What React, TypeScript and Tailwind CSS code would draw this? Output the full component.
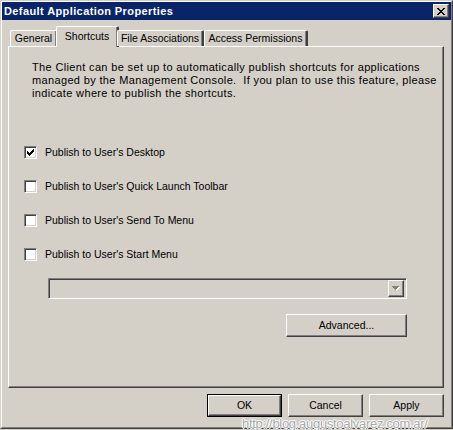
import React from 'react';

// classic 3D edges
const raised =
  'border border-t-white border-l-white border-r-[#404040] border-b-[#404040] shadow-[inset_-1px_-1px_0_#808080]';
const sunken =
  'border border-t-[#808080] border-l-[#808080] border-r-white border-b-white shadow-[inset_1px_1px_0_#404040,inset_-1px_-1px_0_#d4d0c8]';

const font = "font-['Liberation_Sans',Arial,sans-serif]";

const tabs = [
  { label: 'General', width: 48 },
  { label: 'Shortcuts', width: 59, active: true },
  { label: 'File Associations', width: 87 },
  { label: 'Access Permissions', width: 104 },
];

const options = [
  { label: "Publish to User's Desktop", checked: true },
  { label: "Publish to User's Quick Launch Toolbar", checked: false },
  { label: "Publish to User's Send To Menu", checked: false },
  { label: "Publish to User's Start Menu", checked: false },
];

const CheckMark = () => (
  <svg width="7" height="7" viewBox="0 0 7 7" shapeRendering="crispEdges">
    <path
      d="M6 0h1v3H6zM5 1h1v3H5zM4 2h1v3H4zM0 2h1v3H0zM1 3h1v3H1zM2 4h1v3H2zM3 3h1v3H3z"
      fill="#000"
    />
  </svg>
);

const Checkbox = ({ checked }: { checked: boolean }) => (
  <div className={`w-[13px] h-[13px] bg-white flex items-center justify-center ${sunken}`}>
    {checked && <CheckMark />}
  </div>
);

const Button = ({ label, isDefault }: { label: string; isDefault?: boolean }) => (
  <div
    className={`w-[75px] h-[23px] ${isDefault ? 'border border-black' : ''} flex`}
  >
    <div className={`flex-1 flex items-center justify-center text-[10.5px] text-black ${raised}`}>
      {label}
    </div>
  </div>
);

export default function App() {
  return (
    <div
      className={`relative w-[453px] h-[430px] bg-[#d4d0c8] overflow-hidden ${font}`}
    >
      <div className="w-[453px] h-[429px] border border-t-[#d4d0c8] border-l-[#d4d0c8] border-r-[#404040] border-b-[#404040]">
        <div className="h-full border border-t-white border-l-white border-r-[#808080] border-b-[#808080]">
          {/* title bar */}
          <div className="h-[18px] bg-[#0a246a] flex items-center pl-[2px] pr-[2px]">
            <span className="text-white font-bold text-[11px] tracking-[0.4px] leading-none flex-1">
              Default Application Properties
            </span>
            <div className={`w-[16px] h-[14px] bg-[#d4d0c8] flex items-center justify-center ${raised}`}>
              <svg width="8" height="7" viewBox="0 0 8 7" shapeRendering="crispEdges">
                <path
                  d="M0 0h2v1H0zM6 0h2v1H6zM1 1h2v1H1zM5 1h2v1H5zM2 2h4v1H2zM3 3h2v1H3zM2 4h4v1H2zM1 5h2v1H1zM5 5h2v1H5zM0 6h2v1H0zM6 6h2v1H6z"
                  fill="#000"
                />
              </svg>
            </div>
          </div>

          <div className="pl-[6px] pt-[6px]">
            {/* tabs */}
            <div className="flex items-end h-[20px] pl-[2px] relative z-10">
              {tabs.map((t) =>
                t.active ? (
                  <div
                    key={t.label}
                    style={{ width: t.width + 4 }}
                    className="h-[21px] -mx-[2px] -mb-[1px] bg-[#d4d0c8] border-t border-l border-t-white border-l-white border-r-2 border-r-[#404040] rounded-tl-[2px] rounded-tr-[2px] text-[10.5px] text-center pt-[2px] shadow-[inset_-1px_0_0_#808080]"
                  >
                    {t.label}
                  </div>
                ) : (
                  <div
                    key={t.label}
                    style={{ width: t.width }}
                    className="h-[16px] bg-[#d4d0c8] border-t border-l border-t-white border-l-white border-r-2 border-r-[#404040] rounded-tl-[2px] rounded-tr-[2px] text-[10.5px] text-center leading-[15px] shadow-[inset_-1px_0_0_#808080]"
                  >
                    {t.label}
                  </div>
                )
              )}
            </div>

            {/* panel */}
            <div className="w-[436px] h-[342px] border border-t-white border-l-white border-r-[#404040] border-b-[#404040] shadow-[inset_-1px_-1px_0_#808080] pl-[15px] pt-[14px]">
              <p className="ml-[8px] text-[11px] leading-[13px] tracking-[0.35px] text-black w-[405px]">
                The Client can be set up to automatically publish shortcuts for applications
                managed by the Management Console.&nbsp; If you plan to use this feature, please
                indicate where to publish the shortcuts.
              </p>

              <div className="mt-[46px] flex flex-col gap-[21px]">
                {options.map((o) => (
                  <div key={o.label} className="flex items-center h-[13px] gap-[8px]">
                    <Checkbox checked={o.checked} />
                    <span className="text-[10.5px] text-black">{o.label}</span>
                  </div>
                ))}
              </div>

              <div className="ml-[24px] mt-[17px] w-[359px] flex flex-col">
                <div className={`h-[21px] bg-[#d4d0c8] flex items-center justify-end pr-[2px] ${sunken}`}>
                  <div className={`w-[16px] h-[17px] bg-[#d4d0c8] flex items-center justify-center ${raised}`}>
                    <svg width="8" height="5" viewBox="0 0 8 5" shapeRendering="crispEdges">
                      <path d="M1 1h7v1H1zM2 2h5v1H2zM3 3h3v1H3zM4 4h1v1H4z" fill="#fff" />
                      <path d="M0 0h7v1H0zM1 1h5v1H1zM2 2h3v1H2zM3 3h1v1H3z" fill="#808080" />
                    </svg>
                  </div>
                </div>
                <div className="self-end mt-[15px] w-[121px] h-[23px] flex">
                  <div className={`flex-1 flex items-center justify-center text-[10.5px] ${raised}`}>
                    Advanced...
                  </div>
                </div>
              </div>
            </div>

            {/* buttons */}
            <div className="w-[436px] flex justify-end gap-[6px] mt-[6px]">
              <Button label="OK" isDefault />
              <Button label="Cancel" />
              <Button label="Apply" />
            </div>
          </div>
        </div>
      </div>

      <span className="absolute left-[242px] top-[417px] text-[13px] leading-[14px] text-[#a8a8a8] tracking-[-0.3px] [text-shadow:1px_0_0_#fff,-1px_0_0_#fff,0_1px_0_#fff,0_-1px_0_#fff]">
        http://blog.augustoalvarez.com.ar/
      </span>
    </div>
  );
}
